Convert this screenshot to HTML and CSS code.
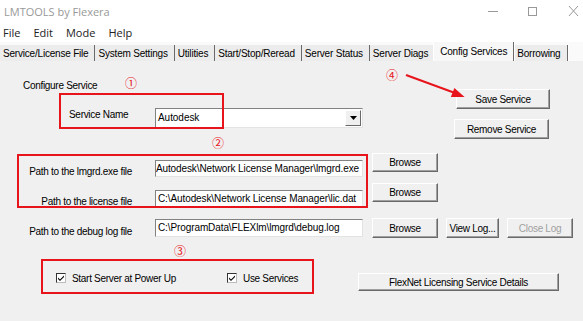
FILE: index.html
```html
<!DOCTYPE html>
<html lang="en">
<head>
  <meta charset="UTF-8">
  <title>LMTOOLS by Flexera</title>
  <link rel="stylesheet" href="styles.css">
</head>
<body>

  <div class="titlebar">
    <span class="title">LMTOOLS by Flexera</span>
    <svg class="controls" width="100" height="22" viewBox="0 0 100 22">
      <line x1="5" y1="11.5" x2="15" y2="11.5" />
      <rect x="45.5" y="7.5" width="8" height="8" fill="none" />
      <line x1="86" y1="6" x2="95" y2="16" />
      <line x1="86" y1="16" x2="95" y2="6" />
    </svg>
  </div>

  <div class="menubar">
    <span>File</span>
    <span>Edit</span>
    <span>Mode</span>
    <span>Help</span>
  </div>

  <div class="tabs">
    <div class="tab">Service/License File</div>
    <div class="tab">System Settings</div>
    <div class="tab">Utilities</div>
    <div class="tab">Start/Stop/Reread</div>
    <div class="tab">Server Status</div>
    <div class="tab">Server Diags</div>
    <div class="tab active">Config Services</div>
    <div class="tab">Borrowing</div>
  </div>

  <div class="panel">
    <div class="top">
      <div class="top-left">
        <div class="heading">Configure Service</div>
        <div class="service-row">
          <span class="service-label">Service Name</span>
          <div class="combo">
            <span class="combo-text">Autodesk</span>
            <span class="combo-btn">
              <svg width="7" height="4" viewBox="0 0 7 4"><polygon points="0,0 7,0 3.5,4" /></svg>
            </span>
          </div>
        </div>
      </div>
      <div class="top-right">
        <div class="btn save">Save Service</div>
        <div class="btn remove">Remove Service</div>
      </div>
    </div>

    <div class="path-row row-exe">
      <span class="path-label">Path to the lmgrd.exe file</span>
      <div class="field scrolled"><span>Autodesk\Network License Manager\lmgrd.exe</span></div>
      <div class="btn browse">Browse</div>
    </div>

    <div class="path-row row-lic">
      <span class="path-label">Path to the license file</span>
      <div class="field"><span>C:\Autodesk\Network License Manager\lic.dat</span></div>
      <div class="btn browse">Browse</div>
    </div>

    <div class="path-row row-log">
      <span class="path-label">Path to the debug log file</span>
      <div class="field"><span>C:\ProgramData\FLEXlm\lmgrd\debug.log</span></div>
      <div class="btn browse">Browse</div>
      <div class="btn view-log">View Log...</div>
      <div class="btn close-log disabled">Close Log</div>
    </div>

    <div class="options">
      <label class="check-item first">
        <span class="checkbox">
          <svg width="8" height="8" viewBox="0 0 8 8"><path d="M1 3.5 L3 5.5 L7 1.5 L7 3 L3 7 L1 5 Z" /></svg>
        </span>
        <span>Start Server at Power Up</span>
      </label>
      <label class="check-item second">
        <span class="checkbox">
          <svg width="8" height="8" viewBox="0 0 8 8"><path d="M1 3.5 L3 5.5 L7 1.5 L7 3 L3 7 L1 5 Z" /></svg>
        </span>
        <span>Use Services</span>
      </label>
      <div class="btn flexnet">FlexNet Licensing Service Details</div>
    </div>

    <!-- annotations drawn over the dialog -->
    <div class="mark box1"></div>
    <div class="mark box2"></div>
    <div class="mark box3"></div>
    <span class="num n1">①</span>
    <span class="num n2">②</span>
    <span class="num n3">③</span>
    <span class="num n4">④</span>
    <svg class="arrow" width="70" height="34" viewBox="0 0 70 34">
      <line x1="6" y1="6" x2="55" y2="24" />
      <polygon points="62,27 52.3,27.1 54.8,20.6" />
    </svg>
  </div>

</body>
</html>
```

FILE: styles.css
```css
body {
  margin: 0;
  width: 583px;
  height: 321px;
  overflow: hidden;
  background: #f0f0f0;
  font-family: "Liberation Sans", Arial, sans-serif;
  font-size: 10px;
  letter-spacing: -0.3px;
  color: #000;
}

.titlebar {
  display: flex;
  align-items: center;
  height: 22px;
  background: #fff;
}
.title {
  margin-left: 4px;
  font-family: "Open Sans", sans-serif;
  font-size: 11px;
  letter-spacing: 0;
  color: #999;
}
.controls {
  margin-left: auto;
  stroke: #999;
  stroke-width: 1;
}

.menubar {
  display: flex;
  gap: 13px;
  height: 20px;
  align-items: center;
  padding-left: 3px;
  background: #fff;
  font-family: "Open Sans", sans-serif;
  font-size: 11px;
  letter-spacing: 0;
  color: #222;
}

.tabs {
  display: flex;
  align-items: flex-end;
  height: 19px;
  background: #fafafa;
}
.tab {
  box-sizing: border-box;
  height: 16px;
  padding: 2px 6px 0 3px;
  line-height: 14px;
  border-right: 1px solid #6a6a6a;
  box-shadow: 1px 0 0 #fff;
  background: #ececec;
  letter-spacing: -0.2px;
  white-space: nowrap;
}
.tab.active {
  position: relative;
  height: 19px;
  padding: 3px 6px 0 6px;
  line-height: 14px;
  margin-left: -2px;
  background: #f7f7f7;
  border-left: 1px solid #fff;
}

.panel {
  position: relative;
  height: 260px;
}

.top {
  display: flex;
}
.top-left {
  padding-top: 19px;
}
.heading {
  margin-left: 23px;
  line-height: 12px;
}
.service-row {
  display: flex;
  align-items: flex-start;
  margin-top: 16px;
}
.service-label {
  width: 86px;
  margin-left: 69px;
  margin-top: 1px;
  line-height: 12px;
}
.combo {
  display: flex;
  width: 208px;
  height: 20px;
  box-sizing: border-box;
  background: #fff;
  border: 1px solid;
  border-color: #828282 #e3e3e3 #e3e3e3 #828282;
}
.combo-text {
  flex: 1;
  padding-left: 2px;
  line-height: 18px;
  letter-spacing: -0.05px;
}
.combo-btn {
  display: flex;
  align-items: center;
  justify-content: center;
  width: 14px;
  margin: 1px;
  background: #f0f0f0;
  border: 1px solid;
  border-color: #fff #696969 #696969 #fff;
}

.top-right {
  display: flex;
  flex-direction: column;
  align-items: flex-end;
  margin-left: auto;
  margin-right: 33px;
  padding-top: 28px;
}

.btn {
  display: flex;
  align-items: center;
  justify-content: center;
  box-sizing: border-box;
  height: 20px;
  background: #f0f0f0;
  border: 1px solid;
  border-color: #fff #696969 #696969 #fff;
  box-shadow: inset -1px -1px 0 #a0a0a0;
  white-space: nowrap;
}
.save { width: 94px; }
.remove { width: 95px; margin-top: 10px; margin-right: 1px; }
.browse { width: 66px; height: 19px; margin-left: 9px; }
.view-log { width: 53px; margin-left: 8px; }
.close-log { width: 66px; margin-left: 8px; }
.disabled { color: #a0a0a0; }

.path-row {
  display: flex;
  align-items: flex-start;
}
.path-label {
  width: 132px;
  margin-right: 23px;
  text-align: right;
  line-height: 12px;
}
.field {
  display: flex;
  overflow: hidden;
  box-sizing: border-box;
  width: 208px;
  height: 17px;
  padding-left: 2px;
  background: #fff;
  border: 1px solid;
  border-color: #828282 #e3e3e3 #e3e3e3 #828282;
  line-height: 15px;
  letter-spacing: -0.1px;
  white-space: nowrap;
}
.field.scrolled {
  justify-content: flex-end;
  padding-right: 3px;
}

.row-exe { margin-top: 14px; }
.row-exe .path-label { margin-top: 13px; }
.row-exe .field { margin-top: 7px; }

.row-lic { margin-top: 5px; }
.row-lic .path-label { margin-top: 13px; }
.row-lic .field { margin-top: 7px; }

.row-log { margin-top: 10px; }
.row-log .path-label { margin-top: 8px; }
.row-log .field { margin-top: 1px; height: 18px; line-height: 16px; }
.row-log .browse { height: 20px; }

.options {
  display: flex;
  align-items: flex-start;
  margin-top: 33px;
}
.check-item {
  display: flex;
  align-items: flex-start;
  gap: 6px;
  line-height: 12px;
}
.check-item span:last-child { margin-top: 2px; }
.check-item.first { margin-left: 56px; width: 171px; }
.check-item.second { width: 131px; }
.checkbox {
  display: flex;
  align-items: center;
  justify-content: center;
  box-sizing: border-box;
  width: 10px;
  height: 10px;
  margin-top: 2px;
  background: #fff;
  border: 1px solid;
  border-color: #333 #bbb #bbb #333;
}
.flexnet {
  width: 201px;
  height: 18px;
  margin-top: 2px;
}

.mark {
  position: absolute;
  box-sizing: border-box;
  border: 2px solid #e8141b;
}
.box1 { left: 59px; top: 32px; width: 165px; height: 36px; }
.box2 { left: 17px; top: 93px; width: 351px; height: 54px; }
.box3 { left: 41px; top: 198px; width: 273px; height: 35px; }

.num {
  position: absolute;
  font-family: "Noto Sans CJK SC", sans-serif;
  font-size: 12px;
  line-height: 12px;
  letter-spacing: 0;
  color: #e8141b;
}
.n1 { left: 125px; top: 16px; }
.n2 { left: 212px; top: 76px; }
.n3 { left: 174px; top: 184px; }
.n4 { left: 386px; top: 8px; }

.arrow {
  position: absolute;
  left: 400px;
  top: 8px;
  stroke: #e8141b;
  stroke-width: 2;
  fill: #e8141b;
}
```
